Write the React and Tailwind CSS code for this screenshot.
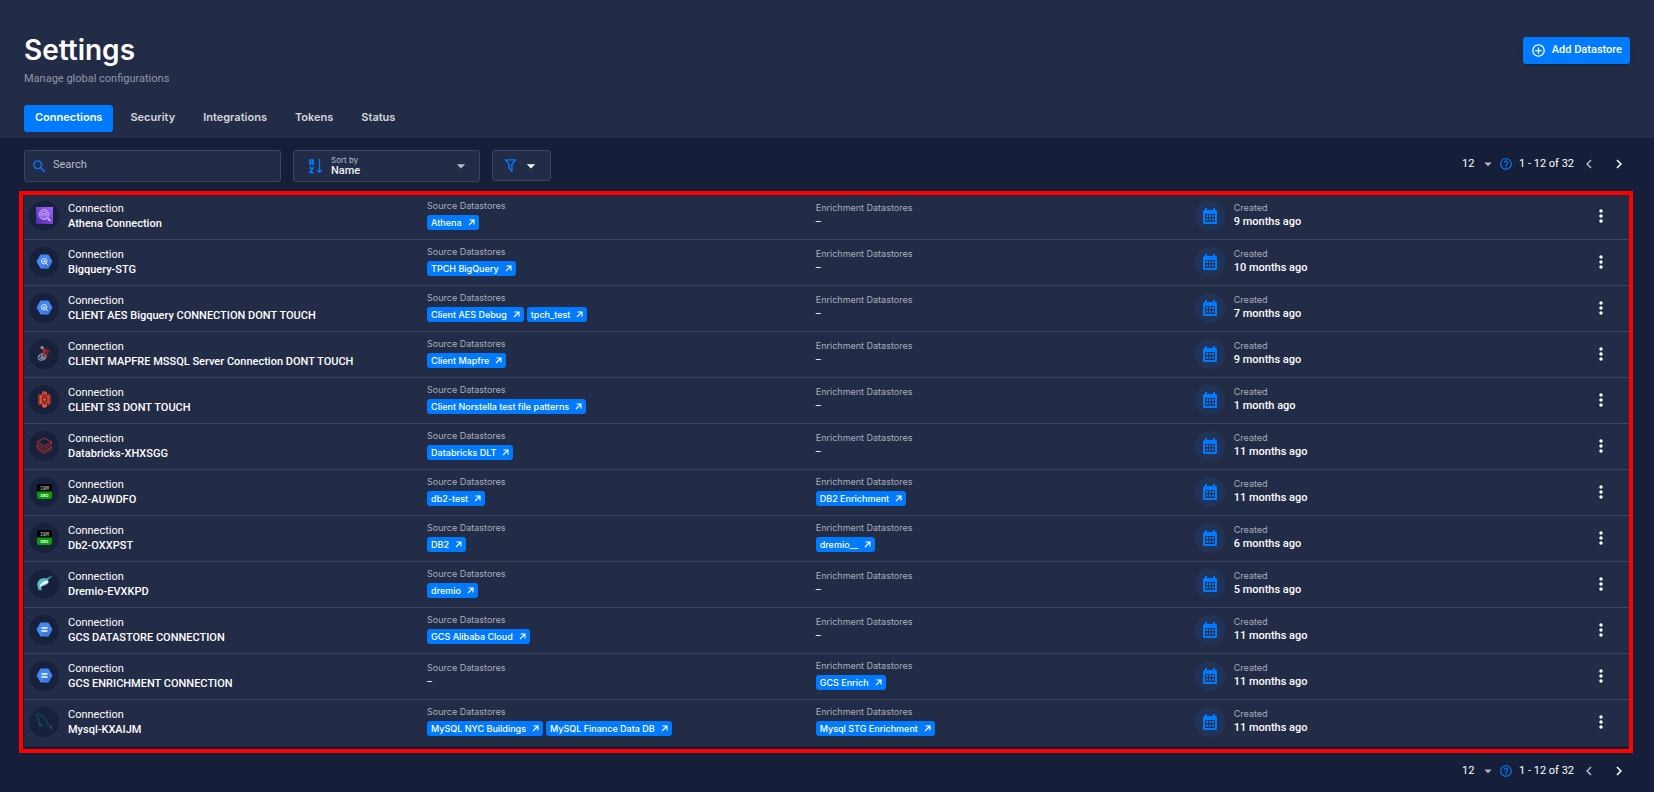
import React from "react";
import {
  MdSearch,
  MdArrowDropDown,
  MdHelpOutline,
  MdChevronLeft,
  MdChevronRight,
  MdMoreVert,
  MdAddCircleOutline,
} from "react-icons/md";

function AthenaLogo() {
  return (
    <svg viewBox="0 0 34 34" className="size-[17px]" aria-hidden="true">
      <defs>
        <linearGradient id="athena" x1="0" y1="1" x2="1" y2="0">
          <stop offset="0" stopColor="#4d27a8" />
          <stop offset="1" stopColor="#a166ff" />
        </linearGradient>
      </defs>
      <rect width="34" height="34" fill="url(#athena)" />
      <g fill="none" stroke="#d9c4ff" strokeWidth="1.4">
        <circle cx="16" cy="15" r="10" />
        <ellipse cx="16" cy="10.500" rx="6" ry="2.2" />
        <path d="M10 10.500v10c0 3 12 3 12 0v-10M6 15h4M13 14v5M16 13v7M19 14v5M22 15h4" />
        <path d="M23 22l6 6" strokeWidth="3" />
      </g>
    </svg>
  );
}

function Hexagon({ children }) {
  return (
    <svg viewBox="0 0 34 34" className="size-[17px]" aria-hidden="true">
      <path d="M10 3h14q1 0 1.500 1l7 12q.5 1 0 2l-7 12q-.5 1-1.500 1H10q-1 0-1.500-1l-7-12q-.5-1 0-2l7-12q.5-1 1.500-1z" fill="#4285f4" />
      <path d="M22 13l8 8-5 9q-.5 1-1.500 1H17l-5-9z" fill="#3b73d6" opacity=".7" />
      {children}
    </svg>
  );
}

function BigQueryLogo() {
  return (
    <Hexagon>
      <g fill="none" stroke="#dce8ff" strokeWidth="2">
        <circle cx="16.500" cy="16.500" r="5.500" />
        <path d="M20.500 20.500l3.500 3.500M14.500 16v3M17 14v5M19 17v2" />
      </g>
    </Hexagon>
  );
}

function GcsLogo() {
  return (
    <Hexagon>
      <path d="M11 12.500h12v3H11zM11 18.500h12v3H11z" fill="#fff" />
    </Hexagon>
  );
}

function MssqlLogo() {
  return (
    <svg viewBox="0 0 34 34" className="size-[17px]" aria-hidden="true">
      <path d="M10 2c4 0 6 2 8 5l12 4-6 3 1 5-6-3-9 1 4-5-2-4-4-1z" fill="#8a1f24" />
      <path d="M12 4l3 1 1 5 6 3-7-1-3-5z" fill="#b0474c" />
      <path d="M8 6l4-5 4 4-4 3z" fill="#8f93a3" />
      <path d="M19 16l5 2-2 7-4 6-2-4z" fill="#7a1d22" />
      <g fill="none" stroke="#8e97a8" strokeWidth="1.800">
        <ellipse cx="12" cy="24" rx="8" ry="6" transform="rotate(-25 12 24)" />
        <path d="M5 23l13 3M9 18l7 11M6 29l13-8M14 17l-3 13" />
      </g>
    </svg>
  );
}

function S3Logo() {
  return (
    <svg viewBox="0 0 34 34" className="size-[17px]" aria-hidden="true">
      <path d="M4 8l3-2v22l-3-2z" fill="#8c3123" />
      <path d="M30 8l-3-2v22l3-2z" fill="#8c3123" />
      <path d="M7 6l6 3v16l-6 3z" fill="#e05243" />
      <path d="M27 6l-6 3v16l6 3z" fill="#d04638" />
      <path d="M11 8l6 2 6-2v18l-6-2-6 2z" fill="#b8382b" />
      <path d="M17 0l5 2.500V9l-5-1.500L12 9V2.500z" fill="#d04638" />
      <path d="M17 34l5-2.500V25l-5 1.500-5-1.500v6.500z" fill="#e05243" />
      <path d="M17 12l5 1v8l-5 1-5-1v-8z" fill="#7a2018" />
      <path d="M17 14l3 1v4l-3 1-3-1v-4z" fill="#e05243" />
    </svg>
  );
}

function DatabricksLogo() {
  return (
    <svg viewBox="0 0 34 34" className="size-[17px]" aria-hidden="true">
      <g fill="none" stroke="#d4302a" strokeWidth="1.700" strokeLinejoin="round">
        <path d="M31 10L17 2 2 10l15 8 14-8v5l-14 8-15-8v5l15 8 14-8v4l-14 8.500L2 24" />
      </g>
    </svg>
  );
}

function Db2Logo() {
  return (
    <svg viewBox="0 0 34 34" className="size-[17px]" aria-hidden="true">
      <rect x="2" y="2" width="30" height="30" rx="4" fill="#000" />
      <path d="M2 17h30v11a4 4 0 0 1-4 4H6a4 4 0 0 1-4-4z" fill="#0a9a0a" />
      <text x="17" y="14.500" textAnchor="middle" fontSize="10" fontWeight="700" fontFamily="Liberation Mono, monospace" fill="#9a9a9a">IBM</text>
      <text x="17" y="27" textAnchor="middle" fontSize="8" fontWeight="700" fontFamily="Inter, sans-serif" fill="#e8ffe8">DB2</text>
    </svg>
  );
}

function DremioLogo() {
  return (
    <svg viewBox="0 0 34 34" className="size-[17px]" aria-hidden="true">
      <path d="M34 1L23 9c4 3 3 8-2 10-5 3-9 3-11 6l2 6-5-2-2 2-1-6C-1 14 8 4 20 7z" fill="#5bbfca" />
      <path d="M24 11c1 4-2 6-6 7-5 2-8 3-10 7-2-7 7-13 16-14z" fill="#fff" />
      <path d="M34 1L21 8l3 2z" fill="#3d93a0" />
    </svg>
  );
}

function MysqlLogo() {
  return (
    <svg viewBox="0 0 34 34" className="size-[17px]" aria-hidden="true">
      <path
        d="M1 2c5-1 9 1 13 5 5 4 8 10 10 16 2 1 5 3 8 5l-5 0 6 5M1 2c0 4 3 6 4 10s0 9 3 14c1-2 2-3 2-5 1 2 2 4 4 5M7 7l2 2"
        fill="none"
        stroke="#0f5675"
        strokeWidth="2"
        strokeLinejoin="round"
      />
    </svg>
  );
}

function CalendarIcon() {
  return (
    <svg viewBox="0 0 14 16" className="h-4 w-3.5" fill="#007bff" aria-hidden="true">
      <path
        fillRule="evenodd"
        d="M2 0h2v2h6V0h2v2h.5A1.500 1.500 0 0 1 14 3.500v11a1.500 1.500 0 0 1-1.500 1.500h-11A1.500 1.500 0 0 1 0 14.500v-11A1.500 1.500 0 0 1 1.500 2H2zM2 6v8h10V6z"
      />
      <path d="M3 7h2v2H3zM6 7h2v2H6zM9 7h2v2H9zM3 10.500h2v2H3zM6 10.500h2v2H6zM9 10.500h2v2H9z" />
    </svg>
  );
}

function SortIcon() {
  return (
    <svg viewBox="0 0 14 15" className="h-[15px] w-3.5 shrink-0" fill="none" stroke="#007bff" aria-hidden="true">
      <path d="M1 6.500V1h3v5.500M1 4h3" strokeWidth="1.700" />
      <path d="M0 9h4L1 13.500h4" strokeWidth="1.700" />
      <path d="M10.500 0v13M8 11l2.500 2.500L13 11" strokeWidth="1.200" />
    </svg>
  );
}

function FilterIcon() {
  return (
    <svg viewBox="0 0 24 24" className="size-[17px]" fill="#007bff" aria-hidden="true">
      <path d="M15 19.880c.04.3-.06.620-.29.830a.996.996 0 0 1-1.410 0L9.290 16.700a.989.989 0 0 1-.29-.830v-5.120L4.210 4.620a1 1 0 0 1 .17-1.400c.19-.14.400-.22.620-.22h14c.22 0 .430.080.620.220a1 1 0 0 1 .17 1.400L15 10.750zM7.040 5L11 10.060v5.520l2 2v-7.530L16.960 5z" />
    </svg>
  );
}

function ExternalArrow() {
  return (
    <svg viewBox="0 0 7 7" className="size-[7px]" fill="none" stroke="currentColor" strokeWidth="1.100" aria-hidden="true">
      <path d="M1.500 1h4.500v4.500M6 1L1 6" />
    </svg>
  );
}

const rows = [
  { logo: AthenaLogo, name: "Athena Connection", source: ["Athena"], enrich: [], created: "9 months ago" },
  { logo: BigQueryLogo, name: "Bigquery-STG", source: ["TPCH BigQuery"], enrich: [], created: "10 months ago" },
  { logo: BigQueryLogo, name: "CLIENT AES Bigquery CONNECTION DONT TOUCH", source: ["Client AES Debug", "tpch_test"], enrich: [], created: "7 months ago" },
  { logo: MssqlLogo, name: "CLIENT MAPFRE MSSQL Server Connection DONT TOUCH", source: ["Client Mapfre"], enrich: [], created: "9 months ago" },
  { logo: S3Logo, name: "CLIENT S3 DONT TOUCH", source: ["Client Norstella test file patterns"], enrich: [], created: "1 month ago" },
  { logo: DatabricksLogo, name: "Databricks-XHXSGG", source: ["Databricks DLT"], enrich: [], created: "11 months ago" },
  { logo: Db2Logo, name: "Db2-AUWDFO", source: ["db2-test"], enrich: ["DB2 Enrichment"], created: "11 months ago" },
  { logo: Db2Logo, name: "Db2-OXXPST", source: ["DB2"], enrich: ["dremio__"], created: "6 months ago" },
  { logo: DremioLogo, name: "Dremio-EVXKPD", source: ["dremio"], enrich: [], created: "5 months ago" },
  { logo: GcsLogo, name: "GCS DATASTORE CONNECTION", source: ["GCS Alibaba Cloud"], enrich: [], created: "11 months ago" },
  { logo: GcsLogo, name: "GCS ENRICHMENT CONNECTION", source: [], enrich: ["GCS Enrich"], created: "11 months ago" },
  { logo: MysqlLogo, name: "Mysql-KXAIJM", source: ["MySQL NYC Buildings", "MySQL Finance Data DB"], enrich: ["Mysql STG Enrichment"], created: "11 months ago" },
];

const tabs = ["Connections", "Security", "Integrations", "Tokens", "Status"];

function Datastores({ label, items }) {
  return (
    <div className="pb-1 font-['Inter',sans-serif]">
      <div className="text-[9px] leading-[14px] text-[#a9aebb]">{label}</div>
      {items.length > 0 ? (
        <div className="mt-0.5 flex gap-[3px]">
          {items.map((item) => (
            <a
              key={item}
              href="#datastore"
              className="flex h-[15px] items-center gap-1.5 rounded-[3px] bg-[#007bff] px-1 text-[9px] font-medium whitespace-nowrap text-white"
            >
              {item}
              <ExternalArrow />
            </a>
          ))}
        </div>
      ) : (
        <div className="text-[10px] leading-[13px] text-white">–</div>
      )}
    </div>
  );
}

function Pagination() {
  return (
    <nav aria-label="Pagination" className="flex items-center pr-0.5 text-[11px] text-white">
      <select aria-label="Rows per page" defaultValue="12" className="appearance-none bg-transparent outline-none">
        <option>12</option>
        <option>24</option>
        <option>48</option>
      </select>
      <MdArrowDropDown className="pointer-events-none ml-1 size-[18px] text-[#b3b7c2]" />
      <button type="button" aria-label="Help" className="ml-0.5 text-[#007bff]">
        <MdHelpOutline className="size-3.5" />
      </button>
      <span className="ml-1.5">1 - 12 of 32</span>
      <button type="button" aria-label="Previous page" className="ml-1.5 text-[#b3b7c2]">
        <MdChevronLeft className="size-[18px]" />
      </button>
      <button type="button" aria-label="Next page" className="ml-3 text-white">
        <MdChevronRight className="size-[18px]" />
      </button>
    </nav>
  );
}

export default function App() {
  return (
    <div className="min-h-screen bg-[#161f3a] font-['Roboto','Inter',sans-serif] text-white">
      <header className="bg-[#232c47] px-6 pt-8 pb-1.5">
        <div className="flex items-start justify-between">
          <div>
            <h1 className="font-['Inter',sans-serif] text-[28px] leading-9 font-semibold">Settings</h1>
            <p className="mt-[3px] text-[11px] leading-4 text-[#9297a6]">Manage global configurations</p>
          </div>
          <button
            type="button"
            className="mt-[5px] flex h-[27px] items-center gap-1.5 rounded-[3px] bg-[#007bff] px-2 text-[11px] font-medium shadow-md"
          >
            <MdAddCircleOutline className="size-[15px]" />
            Add Datastore
          </button>
        </div>
        <nav aria-label="Settings sections" className="mt-[18px] flex gap-1.5 font-['Inter',sans-serif]">
          {tabs.map((tab, i) => (
            <a
              key={tab}
              href="#tab"
              aria-current={i === 0 ? "page" : undefined}
              className={
                i === 0
                  ? "flex h-[27px] items-center rounded-[3px] bg-[#007bff] px-[11px] pb-0.5 text-[11px] font-semibold text-white"
                  : "flex h-[27px] items-center rounded-[3px] px-[11px] pb-0.5 text-[11px] font-semibold text-[#d3d6dd]"
              }
            >
              {tab}
            </a>
          ))}
        </nav>
      </header>

      <main className="px-6 pt-3">
        <div className="flex items-start justify-between">
          <div className="flex items-start gap-3">
            <div className="flex h-8 w-[257px] items-center gap-1 rounded-[3px] border border-[#3d4660] bg-[#232c47] px-1.5">
              <MdSearch className="size-[17px] shrink-0 text-[#007bff]" aria-hidden="true" />
              <input
                type="search"
                aria-label="Search"
                placeholder="Search"
                className="min-w-0 flex-1 bg-transparent pb-0.5 pl-px text-[11px] outline-none placeholder:text-[#b9bdc8]"
              />
            </div>
            <div className="flex h-8 w-[187px] items-center gap-2 rounded-[3px] border border-[#3d4660] bg-[#232c47] pr-2 pl-[15px]">
              <SortIcon />
              <div className="flex flex-1 flex-col">
                <label htmlFor="sort" className="font-['Inter',sans-serif] text-[8px] leading-[10px] text-[#b9bdc8]">Sort by</label>
                <select id="sort" defaultValue="Name" className="appearance-none bg-transparent text-[11px] leading-3 font-medium text-[#eceef2] outline-none">
                  <option>Name</option>
                  <option>Created</option>
                </select>
              </div>
              <MdArrowDropDown className="pointer-events-none size-5 text-[#b9bdc8]" />
            </div>
            <button type="button" aria-label="Filter" className="flex h-[31px] w-[59px] items-center justify-center gap-0.5 rounded-[3px] border border-[#3d4660] bg-[#232c47]">
              <FilterIcon />
              <MdArrowDropDown className="size-5" />
            </button>
          </div>
          <div className="pt-[5px]">
            <Pagination />
          </div>
        </div>

        <div className="relative mt-3">
          <table className="w-full table-fixed border-separate border-spacing-0 bg-[#232c47]">
            <colgroup>
              <col className="w-[25.1%]" />
              <col className="w-[24.2%]" />
              <col className="w-[23.6%]" />
              <col className="w-[23.5%]" />
              <col />
            </colgroup>
            <tbody className="[&>tr>td]:h-[46px] [&>tr>td]:border-b [&>tr>td]:border-[#3d4660] [&>tr:last-child>td]:border-transparent">
              {rows.map(({ logo: Logo, name, source, enrich, created }) => (
                <tr key={name}>
                  <td className="p-0 pb-0.5 align-middle">
                    <div className="flex items-center gap-2 pl-[5px]">
                      <span className="flex size-[30px] shrink-0 items-center justify-center rounded-full bg-[#18213b]">
                        <Logo />
                      </span>
                      <div className="pl-px text-[11px] leading-[15px] whitespace-nowrap">
                        <div>Connection</div>
                        <div className="font-medium">{name}</div>
                      </div>
                    </div>
                  </td>
                  <td className="p-0 align-middle">
                    <Datastores label="Source Datastores" items={source} />
                  </td>
                  <td className="p-0 align-middle">
                    <Datastores label="Enrichment Datastores" items={enrich} />
                  </td>
                  <td className="p-0 pb-0.5 align-middle">
                    <div className="flex items-center gap-[9px]">
                      <span className="flex size-[30px] shrink-0 items-center justify-center rounded-full bg-[#213357]">
                        <CalendarIcon />
                      </span>
                      <div className="pb-0.5">
                        <div className="font-['Inter',sans-serif] text-[9px] leading-[14px] text-[#a9aebb]">Created</div>
                        <div className="text-[11px] leading-[13px] font-medium">{created}</div>
                      </div>
                    </div>
                  </td>
                  <td className="p-0 pb-0.5 align-middle">
                    <button type="button" aria-label={"Actions for " + name} className="mx-auto block">
                      <MdMoreVert className="size-5" />
                    </button>
                  </td>
                </tr>
              ))}
            </tbody>
          </table>
          <div className="pointer-events-none absolute -top-[3px] -right-[3px] -bottom-[7px] -left-[5px] border-4 border-[#ff0000]" />
        </div>

        <div className="flex justify-end pt-4 pb-3">
          <Pagination />
        </div>
      </main>
    </div>
  );
}
